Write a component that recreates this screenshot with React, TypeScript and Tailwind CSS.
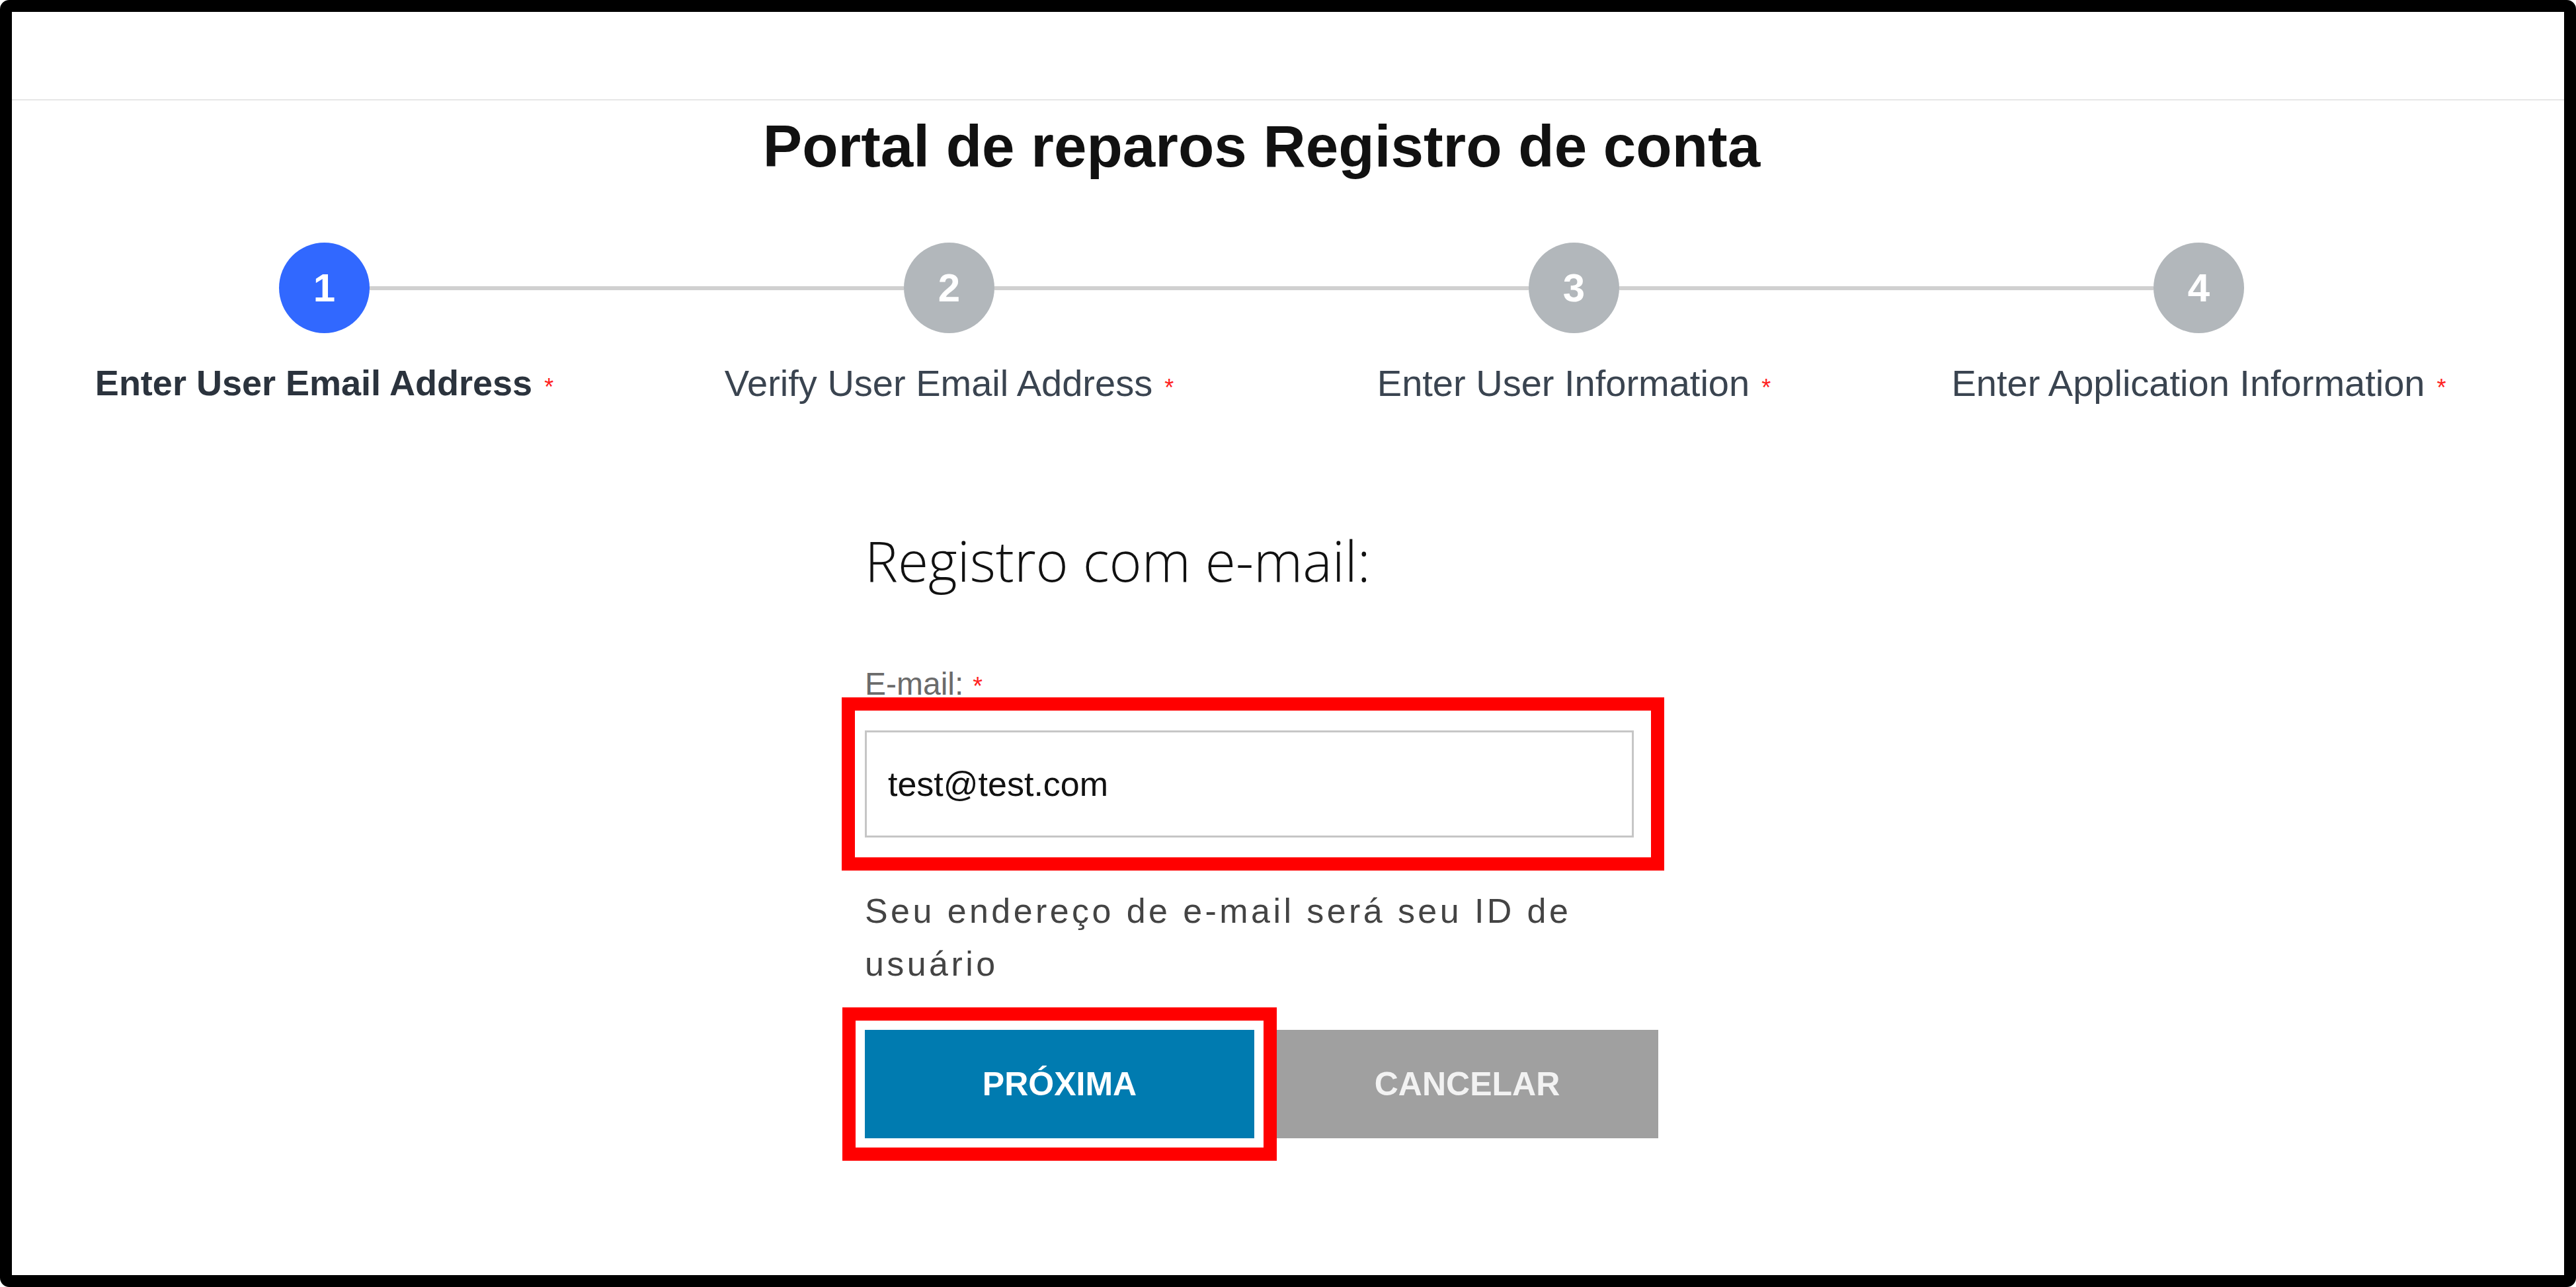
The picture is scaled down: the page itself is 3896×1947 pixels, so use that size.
const steps = [
  { n: "1", label: "Enter User Email Address", active: true },
  { n: "2", label: "Verify User Email Address", active: false },
  { n: "3", label: "Enter User Information", active: false },
  { n: "4", label: "Enter Application Information", active: false },
];

const Stepper = () => (
  <div className="mt-[101px]">
    {/* circles + connectors */}
    <div className="flex items-center pl-[404px]">
      {steps.map((s, i) => (
        <div key={s.n} className="flex items-center">
          <div
            className={`flex h-[137px] w-[137px] items-center justify-center rounded-full text-[60px] font-bold leading-none text-white ${
              s.active ? "bg-[#3168ff]" : "bg-[#b2b7bb]"
            }`}
          >
            {s.n}
          </div>
          {i < steps.length - 1 && <div className="h-[6px] w-[808px] bg-[#d0d0d0]" />}
        </div>
      ))}
    </div>
    {/* labels */}
    <div className="mt-[48px] grid grid-cols-4">
      {steps.map((s) => (
        <div
          key={s.n}
          className={`text-center leading-none ${
            s.active ? "text-[54px] font-bold text-[#2b333d]" : "text-[56px] text-[#3a4450]"
          }`}
        >
          {s.label}
          <span className="ml-[18px] text-[36px] font-normal text-[#ff2020]">*</span>
        </div>
      ))}
    </div>
  </div>
);

const EmailForm = () => (
  <div className="mx-auto mt-[198px] w-[1200px]">
    <h2
      className="text-[84px] font-light leading-none text-[#111]"
      style={{ fontFamily: '"Open Sans", sans-serif' }}
    >
      Registro com e-mail:
    </h2>

    <label className="mt-[121px] block text-[48px] leading-none text-[#6b6b6b]">
      E-mail:
      <span className="ml-[14px] text-[38px] text-[#ff2020]">*</span>
    </label>

    {/* highlighted input */}
    <div className="relative mt-[46px] w-[1163px]">
      <input
        readOnly
        value="test@test.com"
        className="block h-[162px] w-full border-[3px] border-[#c6c6c6] bg-white pl-[32px] text-[52px] text-[#111] outline-none"
      />
      <div className="pointer-events-none absolute -bottom-[50px] -left-[35px] -right-[46px] -top-[50px] border-[20px] border-[#ff0000]" />
    </div>

    <p className="mt-[71px] w-[1163px] text-[52px] leading-[80px] tracking-[0.085em] text-[#444]">
      Seu endereço de e-mail será seu ID de usuário
    </p>

    <div className="mt-[60px] flex gap-[33px]">
      <div className="relative">
        <button className="h-[164px] w-[589px] bg-[#007bb0] text-[50px] font-bold text-white">
          PRÓXIMA
        </button>
        <div className="pointer-events-none absolute -inset-[34px] border-[20px] border-[#ff0000]" />
      </div>
      <button className="h-[164px] w-[584px] bg-[#a0a0a0] text-[50px] font-bold text-[#f2f2f2]">
        CANCELAR
      </button>
    </div>
  </div>
);

export default function App() {
  return (
    <div
      className="h-[1947px] w-full overflow-hidden rounded-[14px] border-[18px] border-black bg-white"
      style={{ fontFamily: '"Liberation Sans", Arial, sans-serif' }}
    >
      <div className="h-[132px]" />
      <div className="h-[2px] bg-[#e6e6e6]" />
      <div className="w-[3780px]">
        <h1 className="mt-[25px] text-center text-[89px] font-bold leading-none text-[#111]">
          Portal de reparos Registro de conta
        </h1>
        <Stepper />
        <EmailForm />
      </div>
    </div>
  );
}
